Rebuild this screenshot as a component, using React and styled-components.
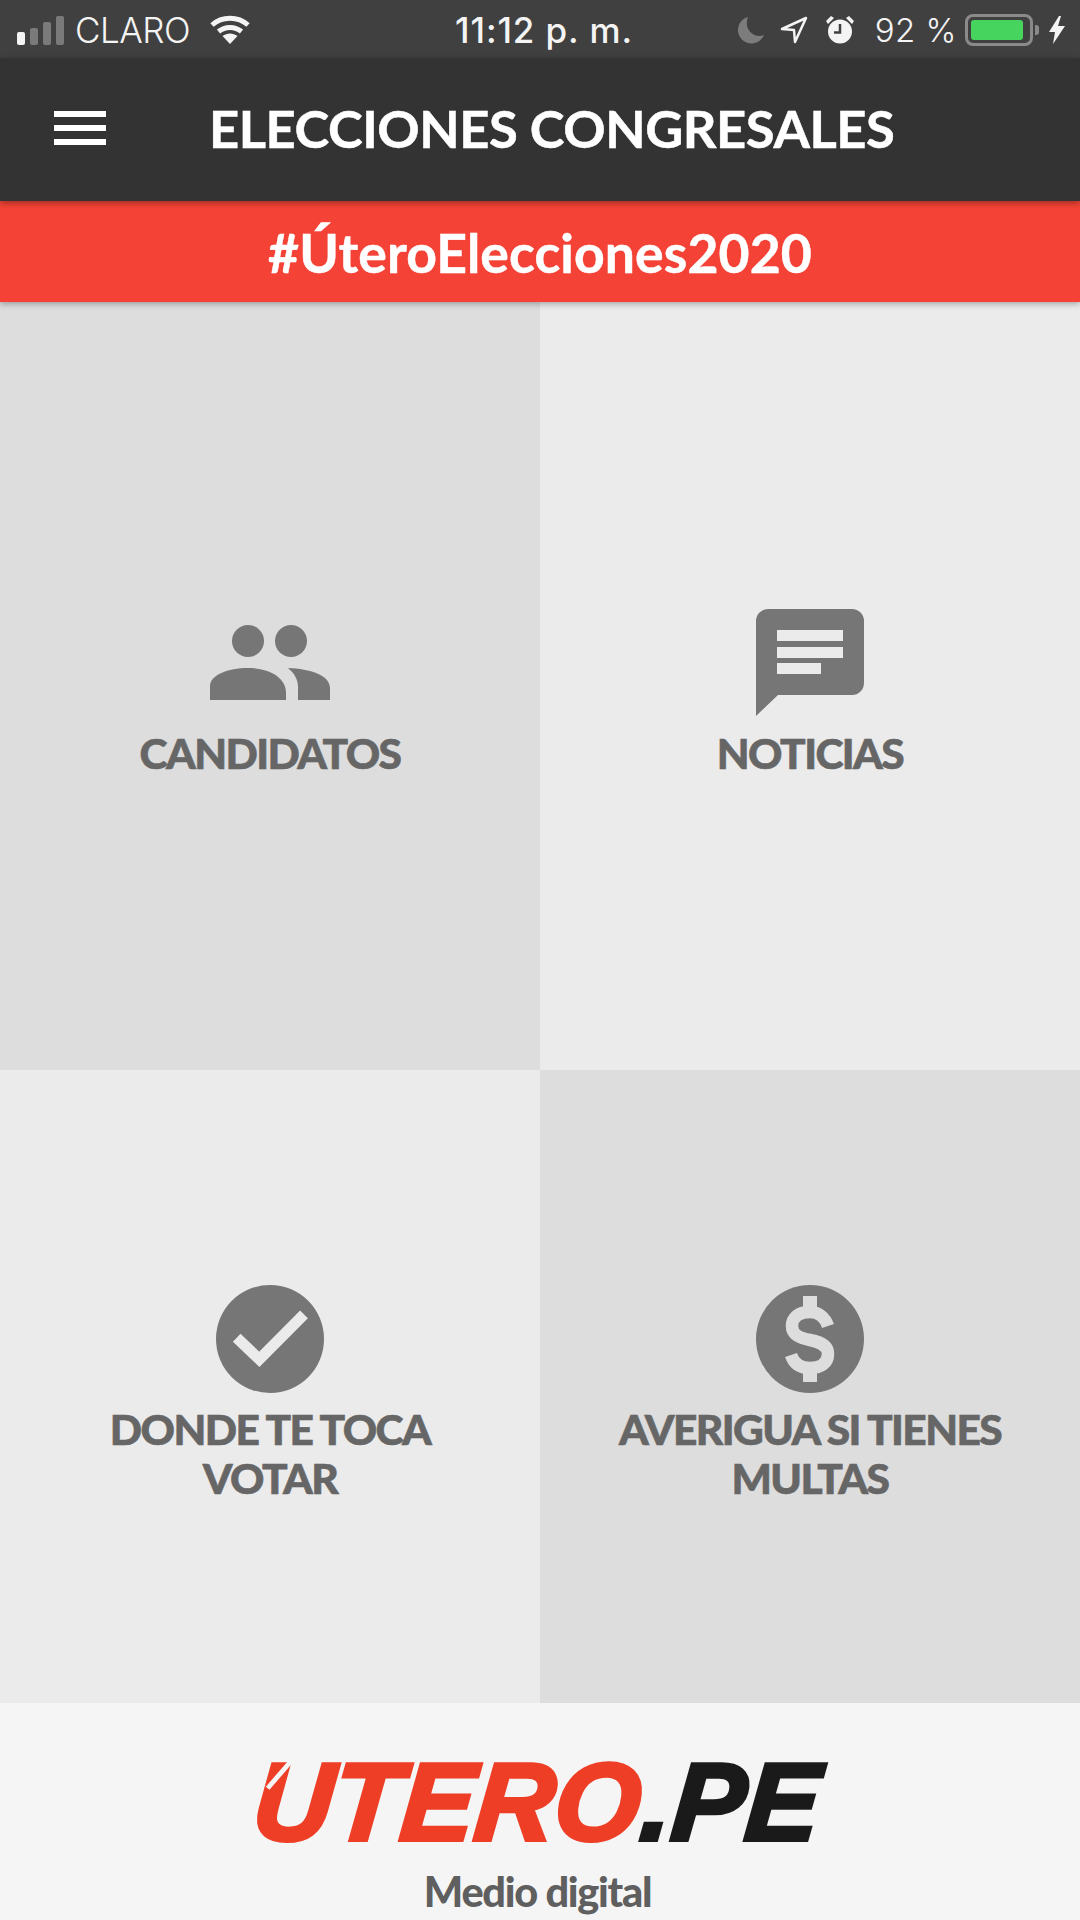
import React from "react";
import styled, { createGlobalStyle } from "styled-components";

const Global = createGlobalStyle`
  html, body { margin: 0; padding: 0; background: #f5f5f5; }
  * { box-sizing: border-box; }
`;
const Page = styled.div`
  width: 1080px; height: 1920px; display: flex; flex-direction: column; overflow: hidden;
  font-family: Lato, "Open Sans", sans-serif;
`;
const StatusBar = styled.div`
  height: 58px; flex: none; background: #404040; color: #f4f4f4;
  display: grid; grid-template-columns: 1fr auto 1fr; align-items: center;
  padding: 2px 15px 0 17px; font-family: Inter, sans-serif; font-size: 35px;
`;
const StatusLeft = styled.div`display: flex; align-items: center; font-weight: 300; letter-spacing: -0.5px;`;
const StatusTime = styled.div`font-weight: 500; font-size: 35px; letter-spacing: 0.9px; margin-left: 6px;`;
const StatusRight = styled.div`display: flex; align-items: center; justify-content: flex-end; font-weight: 300;`;
const Percent = styled.span`margin: 0 8px 0 20px; font-size: 33px; letter-spacing: 0.5px; white-space: nowrap;`;
const Signal = styled.div`display: flex; align-items: flex-end; gap: 5px; height: 30px; margin-right: 11px;`;
const SignalBar = styled.i`
  display: block; width: 8px; height: ${p => p.$h}px; border-radius: 2px;
  background: ${p => (p.$on ? "#f4f4f4" : "#7a7a7a")};
`;
const WifiSlot = styled.span`display: flex; margin-left: 20px;`;
const Battery = styled.div`
  width: 68px; height: 32px; border: 3px solid #8a8a8a; border-radius: 8px; padding: 3px; position: relative; margin-right: 16px;
  &::after { content: ""; position: absolute; right: -9px; top: 8px; width: 4px; height: 10px; background: #8a8a8a; border-radius: 0 3px 3px 0; }
`;
const BatteryFill = styled.div`height: 100%; width: 92%; background: #46d45f; border-radius: 3px;`;
const Header = styled.header`
  height: 143px; flex: none; background: #333333; display: flex; align-items: center;
  padding: 0 0 4px 54px; position: relative; z-index: 3; box-shadow: 0 2px 6px rgba(0,0,0,.35);
`;
const Burger = styled.div`display: flex; flex-direction: column; gap: 8px; width: 52px; margin-right: 103px;`;
const BurgerLine = styled.i`display: block; height: 6px; background: #fff;`;
const Title = styled.h1`
  margin: 0; color: #fff; font-size: 52.5px; font-weight: 700; letter-spacing: -0.45px; white-space: nowrap;
  -webkit-text-stroke: 0.5px currentColor;
`;
const Banner = styled.div`
  height: 101px; flex: none; background: #f44336; display: flex; align-items: center; justify-content: center;
  color: #fff; font-size: 53.5px; font-weight: 700; position: relative; z-index: 2; box-shadow: 0 2px 6px rgba(0,0,0,.3);
  letter-spacing: 0.1px; -webkit-text-stroke: 0.5px currentColor;
`;
const Grid = styled.main`
  height: 1401px; flex: none; display: grid; grid-template-columns: 540px 540px; grid-template-rows: 768px 633px;
`;
const Cell = styled.a`
  background: ${p => (p.$dark ? "#dddddd" : "#ebebeb")};
  display: flex; flex-direction: column; align-items: center; justify-content: center;
  padding-top: 13px;
`;
const IconBox = styled.div`height: 108px; display: flex; align-items: center; justify-content: center; margin-bottom: 11px;`;
const Label = styled.div`
  color: #666666; font-size: 42.5px; font-weight: 900; line-height: 49px; letter-spacing: -1.6px; text-align: center; text-transform: uppercase;
  -webkit-text-stroke: 0.6px currentColor;
`;
const Footer = styled.footer`
  flex: 1; background: #f5f5f5; display: flex; flex-direction: column; align-items: center;
`;
const Logo = styled.div`
  position: relative; margin: 39px 0 0 -6px; font-family: "Liberation Sans", sans-serif; font-style: italic; font-weight: 700; font-size: 110px;
  line-height: 120px; letter-spacing: 0.5px; color: #ee3e26; -webkit-text-stroke: 4px currentColor; white-space: nowrap;
  transform: skewX(-5deg);
  clip-path: inset(18px -30px 0 -30px);
  &::after {
    content: ""; position: absolute; left: 21px; top: 14px; width: 5px; height: 36px;
    background: #f5f5f5; transform: rotate(38deg);
  }
`;
const LogoDark = styled.span`color: #1a1a1a;`;
const Tagline = styled.div`
  color: #5f5f5f; font-size: 41.5px; font-weight: 900; letter-spacing: -1.3px; line-height: 46px; margin: 6px 5px 0 0;
`;

const G = "#767676";
const People = () => (
  <svg width="120" height="75" viewBox="0 0 120 75">
    <circle cx="38" cy="16" r="16" fill={G} />
    <circle cx="81" cy="16" r="16" fill={G} />
    <path fill={G} d="M0 75V61C0 50 18 43 38 43C58 43 76 52 76 68V75Z" />
    <path fill={G} d="M78 43C100 44 120 50 120 63V75H88V62C88 54 84 48 78 43Z" />
  </svg>
);
const Bubble = () => (
  <svg width="108" height="108" viewBox="0 0 108 108">
    <path fill={G} d="M12 0H96A12 12 0 0 1 108 12V74A12 12 0 0 1 96 86H22L0 107V12A12 12 0 0 1 12 0Z" />
    <path fill="#ebebeb" d="M21 21H87V32H21ZM21 38H87V49H21ZM21 54H65V65H21Z" />
  </svg>
);
const Check = () => (
  <svg width="108" height="108" viewBox="0 0 108 108">
    <circle cx="54" cy="54" r="54" fill={G} />
    <path fill="none" stroke="#ebebeb" strokeWidth="11" d="M20.7 52.7L43.3 74.3L88 29.3" />
  </svg>
);
const Dollar = () => (
  <svg width="108" height="108" viewBox="0 0 108 108">
    <circle cx="54" cy="54" r="54" fill={G} />
    <path fill="#dddddd" d="M47 11H61V24H47ZM47 84H61V97H47Z" />
    <path fill="none" stroke="#dddddd" strokeWidth="12.500" d="M72 41C69 32 62 27 54 27C42 27 36 33 36 41C36 50 44 53 54 55C65 57 72 61 72 69C72 78 65 83 54 83C45 83 38 79 35 70" />
  </svg>
);
const Wifi = () => (
  <svg width="40" height="30" viewBox="0 0 40 30" fill="none" stroke="#f4f4f4" strokeWidth="5">
    <path d="M2 10C12 1 28 1 38 10" />
    <path d="M8.500 16.500C15 11 25 11 31.500 16.500" />
    <path fill="#f4f4f4" stroke="none" d="M12.500 21C17 17.500 23 17.500 27.500 21L20 29Z" />
  </svg>
);
const Moon = () => (
  <svg width="27" height="27" viewBox="0 0 27 27"><path fill="#7c7c7c" d="M11 0A13.500 13.500 0 1 0 27 18C17 22 6 12 11 0Z" /></svg>
);
const Arrow = () => (
  <svg width="28" height="28" viewBox="0 0 28 28" style={{ marginLeft: 16 }}>
    <path fill="none" stroke="#f4f4f4" strokeWidth="2.500" strokeLinejoin="round" d="M2 13L26 2L15 26L14 14Z" />
  </svg>
);
const Alarm = () => (
  <svg width="30" height="30" viewBox="0 0 30 30" style={{ marginLeft: 17 }}>
    <circle cx="15" cy="16.500" r="12" fill="#f4f4f4" />
    <path fill="#f4f4f4" d="M1 6L6 1L9 3L3 9ZM29 6L24 1L21 3L27 9Z" />
    <path fill="none" stroke="#404040" strokeWidth="2.500" d="M15 9V17.500H9" />
  </svg>
);
const Bolt = () => (
  <svg width="16" height="28" viewBox="0 0 16 28"><path fill="#f4f4f4" d="M10 0L0 16H6L4 28L16 10H9L12 0Z" /></svg>
);

export default function App() {
  return (
    <Page>
      <Global />
      <StatusBar>
        <StatusLeft>
          <Signal>
            <SignalBar $on $h={13} /><SignalBar $h={17} /><SignalBar $h={23} /><SignalBar $h={29} />
          </Signal>
          <span>CLARO</span>
          <WifiSlot><Wifi /></WifiSlot>
        </StatusLeft>
        <StatusTime>11:12 p. m.</StatusTime>
        <StatusRight>
          <Moon /><Arrow /><Alarm />
          <Percent>92 %</Percent>
          <Battery><BatteryFill /></Battery>
          <Bolt />
        </StatusRight>
      </StatusBar>
      <Header>
        <Burger><BurgerLine /><BurgerLine /><BurgerLine /></Burger>
        <Title>ELECCIONES CONGRESALES</Title>
      </Header>
      <Banner>#ÚteroElecciones2020</Banner>
      <Grid>
        <Cell $dark><IconBox><People /></IconBox><Label>Candidatos</Label></Cell>
        <Cell><IconBox><Bubble /></IconBox><Label>Noticias</Label></Cell>
        <Cell><IconBox><Check /></IconBox><Label>Donde te toca<br />votar</Label></Cell>
        <Cell $dark><IconBox><Dollar /></IconBox><Label>Averigua si tienes<br />multas</Label></Cell>
      </Grid>
      <Footer>
        <Logo>ÚTERO<LogoDark>.PE</LogoDark></Logo>
        <Tagline>Medio digital</Tagline>
      </Footer>
    </Page>
  );
}
